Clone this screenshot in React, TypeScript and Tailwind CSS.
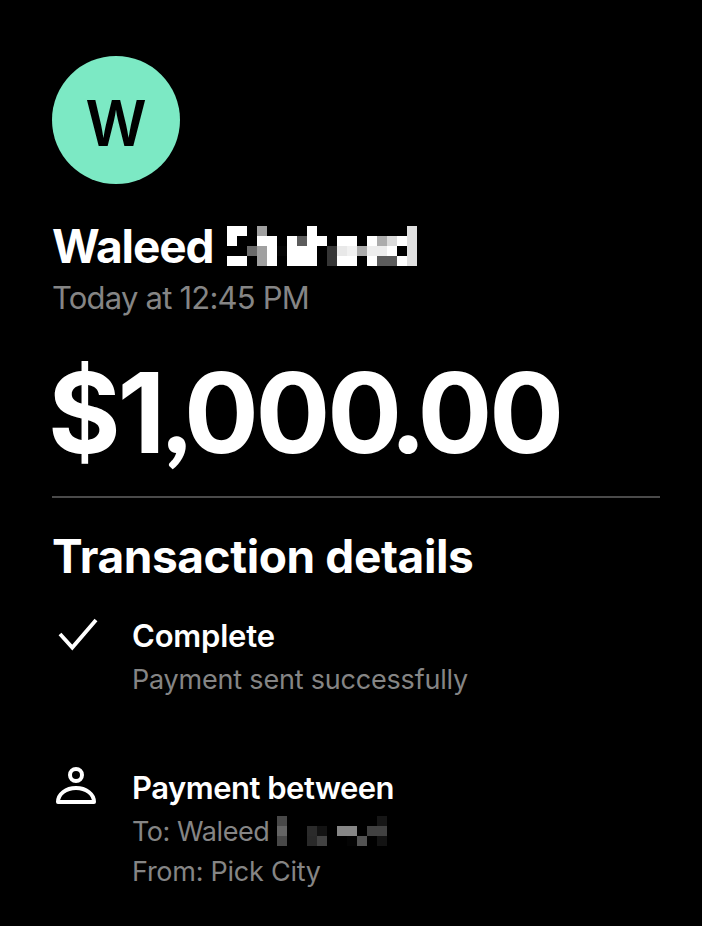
const NAME_CELLS: string[][] = [
  ["#fff", "#fff", "", "#a0a0a0", "", "", "", "", "#fff", "", "", "", "", "", "", "", "", "", "#e0e0e0"],
  ["#fff", "", "", "#fff", "#fff", "", "#fff", "#5c5c5c", "#fff", "#fff", "", "#fff", "#fff", "", "#fff", "#acacac", "#dadada", "#fff", "#e0e0e0"],
  ["", "", "#6b6b6b", "#a0a0a0", "#fff", "#050505", "#fff", "#fff", "#fff", "", "#363636", "#e8e8e8", "#f1f1f1", "#acacac", "#ededed", "#ededed", "#fff", "", "#e0e0e0"],
  ["#fff", "#fff", "", "#a0a0a0", "#fff", "", "#fff", "#fff", "#fff", "", "#363636", "#fff", "#fff", "", "#fff", "#5c5c5c", "#5c5c5c", "#fff", "#e0e0e0"],
];

const RECIPIENT_CELLS: string[][] = [
  ["#484848", "", "", "", "", "", "", "", "", "", "#161616"],
  ["#646464", "", "", "#2b2b2b", "#131313", "", "#868686", "#868686", "", "#414141", "#414141"],
  ["#484848", "", "", "#292929", "#424242", "", "", "#040404", "#535353", "", "#131313"],
];

function Mosaic({ cells }: { cells: string[][] }) {
  return (
    <div className="flex shrink-0 flex-col">
      {cells.map((row, y) => (
        <div key={y} className="flex">
          {row.map((color, x) => (
            <div key={x} className="size-2.5" style={{ backgroundColor: color || "#000" }} />
          ))}
        </div>
      ))}
    </div>
  );
}

function CheckIcon() {
  return (
    <svg className="size-12 shrink-0" viewBox="0 0 48 48" fill="none" stroke="#fff" strokeWidth="3.8">
      <path d="M8 23 20.3 36.6 44 9" />
    </svg>
  );
}

function PersonIcon() {
  return (
    <svg className="size-12 shrink-0" viewBox="0 0 48 48" fill="none" stroke="#fff" strokeWidth="4" strokeLinejoin="round">
      <circle cx="24" cy="12" r="6" />
      <path d="M6 39C6 31 14 25 24 25s18 6 18 14Z" />
    </svg>
  );
}

export default function App() {
  return (
    <main className="flex h-[926px] w-[702px] flex-col overflow-hidden bg-black pl-[52px] pr-[42px] pt-14 font-['Inter','Liberation_Sans',sans-serif] whitespace-nowrap text-white">
      <div className="flex size-32 shrink-0 items-center justify-center rounded-full bg-[#7ce9c4] pt-[6px] text-[63px] leading-none font-semibold text-black">
        <span className="inline-block scale-x-95">W</span>
      </div>

      <div className="mt-[38px] flex h-12 items-center">
        <h1 className="w-[175px] text-[46px] leading-[48px] font-bold tracking-[-1.1px]">Waleed</h1>
        <Mosaic cells={NAME_CELLS} />
      </div>
      <p className="mt-[8px] text-[31px] leading-[40px] tracking-[-0.78px] text-[#858585]">Today at 12:45 PM</p>

      <div className="-ml-1 mt-[35px] h-[120px] text-[111px] leading-[120px] font-bold tracking-[-3.2px]">
        $1
        <span className="ml-[1.5px] font-['Lato',sans-serif] leading-none font-black tracking-[-6px]">,</span>
        00
        <span className="tracking-[-9.2px]">0.</span>
        00
      </div>

      <hr className="mt-[23px] h-0.5 shrink-0 border-0 bg-[#4a4a4a]" />

      <h2 className="mt-[34px] text-[46px] leading-[48px] font-bold tracking-[-0.4px]">Transaction details</h2>

      <section className="mt-[31px] flex h-[96px] gap-8">
        <CheckIcon />
        <div className="pt-[5px]">
          <h3 className="text-[31px] leading-[40px] font-semibold tracking-[-0.2px]">Complete</h3>
          <p className="mt-[4px] text-[27px] leading-[40px] tracking-[-0.2px] text-[#858585]">Payment sent successfully</p>
        </div>
      </section>

      <section className="mt-[56px] flex gap-8">
        <PersonIcon />
        <div className="pt-[5px]">
          <h3 className="text-[31px] leading-[40px] font-semibold tracking-[-0.5px]">Payment between</h3>
          <div className="mt-[3px] flex h-10 items-center">
            <p className="w-[145px] pt-px text-[27px] leading-[40px] tracking-[-0.45px] text-[#858585]">To: Waleed</p>
            <Mosaic cells={RECIPIENT_CELLS} />
          </div>
          <p className="pt-px text-[27px] leading-[40px] tracking-[-0.25px] text-[#858585]">From: Pick City</p>
        </div>
      </section>
    </main>
  );
}
